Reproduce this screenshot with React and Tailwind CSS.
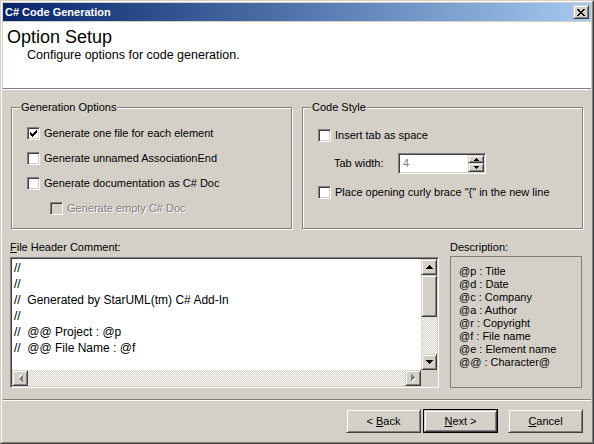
import React from 'react';

const HEADER_LINES = [
  '//',
  '//',
  '//  Generated by StarUML(tm) C# Add-In',
  '//',
  '//  @@ Project : @p',
  '//  @@ File Name : @f',
];

const DESCRIPTION = [
  '@p : Title',
  '@d : Date',
  '@c : Company',
  '@a : Author',
  '@r : Copyright',
  '@f : File name',
  '@e : Element name',
  '@@ : Character@',
];

const raised =
  'border border-t-[#d4d0c8] border-l-[#d4d0c8] border-r-[#404040] border-b-[#404040] shadow-[inset_1px_1px_0_#ffffff,inset_-1px_-1px_0_#808080] bg-[#d4d0c8]';
const sunken =
  'border border-t-[#808080] border-l-[#808080] border-r-white border-b-white shadow-[inset_1px_1px_0_#404040,inset_-1px_-1px_0_#d4d0c8]';
const dither =
  'bg-[repeating-conic-gradient(#d4d0c8_0_25%,#ffffff_0_50%)] bg-[length:2px_2px]';

const CheckMark = () => (
  <svg width="7" height="7" viewBox="0 0 7 7" shapeRendering="crispEdges" className="absolute left-[2px] top-[2px]">
    <path
      fill="#000"
      d="M0 2h1v3H0z M1 3h1v3H1z M2 4h1v3H2z M3 3h1v3H3z M4 2h1v3H4z M5 1h1v3H5z M6 0h1v3H6z"
    />
  </svg>
);

const Checkbox = ({ checked, disabled }) => (
  <span
    className={`relative block w-[13px] h-[13px] shrink-0 ${sunken} ${
      disabled ? 'bg-[#d4d0c8]' : 'bg-white'
    }`}
  >
    {checked && <CheckMark />}
  </span>
);

const CheckRow = ({ label, checked, disabled, className = '' }) => (
  <div className={`flex items-center gap-[4px] h-[13px] ${className}`}>
    <Checkbox checked={checked} disabled={disabled} />
    <span
      className={`whitespace-nowrap leading-[13px] ${
        disabled ? 'text-[#808080] [text-shadow:1px_1px_0_#ffffff]' : 'text-black'
      }`}
    >
      {label}
    </span>
  </div>
);

const GroupBox = ({ title, children, className = '' }) => (
  <div
    className={`relative h-[122px] flex-1 border border-[#808080] shadow-[inset_1px_1px_0_#ffffff,1px_1px_0_#ffffff] ${className}`}
  >
    <span className="absolute -top-[7px] left-[8px] px-px bg-[#d4d0c8] leading-[13px] whitespace-nowrap">
      {title}
    </span>
    {children}
  </div>
);

// small pixel arrows, drawn row by row
const ArrowUp = ({ w = 7, color = '#000' }) => {
  const rows = Math.ceil(w / 2);
  let d = '';
  for (let i = 0; i < rows; i++) d += `M${rows - 1 - i} ${i}h${i * 2 + 1}v1h-${i * 2 + 1}z `;
  return (
    <svg width={w} height={rows} viewBox={`0 0 ${w} ${rows}`} shapeRendering="crispEdges">
      <path fill={color} d={d} />
    </svg>
  );
};

const ArrowDown = ({ w = 7, color = '#000' }) => (
  <span className="block rotate-180 leading-none">
    <ArrowUp w={w} color={color} />
  </span>
);

const ArrowSide = ({ dir, color = '#808080' }) => (
  <svg
    width="5"
    height="8"
    viewBox="0 0 5 8"
    shapeRendering="crispEdges"
    className={dir === 'right' ? '' : 'rotate-180'}
  >
    <path fill="#ffffff" d="M1 1h1v7H1z M2 2h1v5H2z M3 3h1v3H3z M4 4h1v1H4z" />
    <path fill={color} d="M0 0h1v7H0z M1 1h1v5H1z M2 2h1v3H2z M3 3h1v1H3z" />
  </svg>
);

const PushButton = ({ children, isDefault }) => (
  <div className={`h-[24px] w-[75px] ${isDefault ? 'border border-black' : ''}`}>
    <div className={`h-full w-full flex items-center justify-center ${raised}`}>{children}</div>
  </div>
);

export default function App() {
  return (
    <div className="w-[594px] h-[444px] bg-[#d4d0c8] border border-t-[#d4d0c8] border-l-[#d4d0c8] border-r-[#404040] border-b-[#404040] font-['Liberation_Sans',Arial,sans-serif] text-[11px] text-black overflow-hidden">
      <div className="h-full flex flex-col border border-t-white border-l-white border-r-[#808080] border-b-[#808080] p-px">
        {/* title bar */}
        <div className="h-[18px] shrink-0 flex items-center justify-between pl-[2px] pr-[2px] bg-gradient-to-r from-[#0a246a] to-[#a6caf0]">
          <span className="text-white font-bold text-[11px] leading-[18px]">C# Code Generation</span>
          <div className={`w-[16px] h-[14px] flex items-center justify-center ${raised}`}>
            <svg width="8" height="7" viewBox="0 0 8 7" shapeRendering="crispEdges">
              <path
                fill="#000"
                d="M0 0h2v1H0z M6 0h2v1H6z M1 1h2v1H1z M5 1h2v1H5z M2 2h4v1H2z M3 3h2v1H3z M2 4h4v1H2z M1 5h2v1H1z M5 5h2v1H5z M0 6h2v1H0z M6 6h2v1H6z"
              />
            </svg>
          </div>
        </div>

        {/* header */}
        <div className="mt-px h-[66px] shrink-0 bg-white pl-[4px] pt-[5px]">
          <div className="text-[18px] leading-[20px]">Option Setup</div>
          <div className="mt-px ml-[20px] text-[12.5px] leading-[14px]">Configure options for code generation.</div>
        </div>
        <div className="h-px bg-[#808080]" />
        <div className="h-px bg-white" />

        {/* body */}
        <div className="flex-1 flex flex-col px-[8px] pt-[17px]">
          <div className="flex gap-[10px]">
            <GroupBox title="Generation Options">
              <div className="flex flex-col gap-[12px] pl-[15px] pt-[19px]">
                <CheckRow label="Generate one file for each element" checked />
                <CheckRow label="Generate unnamed AssociationEnd" />
                <CheckRow label="Generate documentation as C# Doc" />
                <CheckRow label="Generate empty C# Doc" disabled className="ml-[23px]" />
              </div>
            </GroupBox>
            <GroupBox title="Code Style">
              <div className="flex flex-col pl-[15px] pt-[21px]">
                <CheckRow label="Insert tab as space" />
                <div className="flex items-center ml-[16px] mt-[11px]">
                  <span className="w-[64px] leading-[13px]">Tab width:</span>
                  <div className={`w-[88px] h-[21px] flex bg-white ${sunken} p-px`}>
                    <span className="flex-1 pl-[3px] text-[#808080] leading-[17px]">4</span>
                    <div className="w-[16px] flex flex-col">
                      <div className={`h-[8px] flex items-center justify-center ${raised}`}>
                        <ArrowUp w={5} />
                      </div>
                      <div className={`h-[9px] flex items-center justify-center ${raised}`}>
                        <ArrowDown w={5} />
                      </div>
                    </div>
                  </div>
                </div>
                <CheckRow label={'Place opening curly brace "{" in the new line'} className="mt-[12px]" />
              </div>
            </GroupBox>
          </div>

          <div className="flex gap-[11px] -ml-px mt-[12px]">
            <div className="w-[429px] flex flex-col">
              <span className="leading-[13px]">
                <span className="underline">F</span>ile Header Comment:
              </span>
              <div className={`mt-[3px] h-[131px] flex flex-col bg-white ${sunken} p-px`}>
                <div className="flex-1 flex min-h-0">
                  <div className="flex-1 overflow-hidden pl-[2px] pt-px text-[12px] leading-[16px]">
                    {HEADER_LINES.map((line, i) => (
                      <div key={i} className="whitespace-pre">
                        {line}
                      </div>
                    ))}
                  </div>
                  <div className="w-[16px] flex flex-col">
                    <div className={`h-[16px] flex items-center justify-center ${raised}`}>
                      <ArrowUp />
                    </div>
                    <div className={`h-[42px] ${raised}`} />
                    <div className={`flex-1 ${dither}`} />
                    <div className={`h-[16px] flex items-center justify-center ${raised}`}>
                      <ArrowDown />
                    </div>
                  </div>
                </div>
                <div className="h-[16px] flex">
                  <div className={`w-[16px] flex items-center justify-center ${raised}`}>
                    <ArrowSide dir="left" />
                  </div>
                  <div className={`flex-1 ${dither}`} />
                  <div className={`w-[16px] flex items-center justify-center ${raised}`}>
                    <ArrowSide dir="right" />
                  </div>
                  <div className="w-[16px] bg-[#d4d0c8]" />
                </div>
              </div>
            </div>

            <div className="w-[132px] flex flex-col">
              <span className="leading-[13px]">Description:</span>
              <div className="mt-[2px] h-[132px] border border-[#808080] pl-[8px] pt-[8px]">
                {DESCRIPTION.map((line) => (
                  <div key={line} className="leading-[13px] whitespace-nowrap">
                    {line}
                  </div>
                ))}
              </div>
            </div>
          </div>

          <div className="-mx-[8px] mt-[11px] h-px bg-[#808080]" />
          <div className="-mx-[8px] h-px bg-white" />

          <div className="mt-[8px] flex justify-end">
            <PushButton>
              &lt; <span className="underline ml-[3px]">B</span>ack
            </PushButton>
            <div className="ml-[2px]">
              <PushButton isDefault>
                <span className="underline">N</span>ext &gt;
              </PushButton>
            </div>
            <div className="ml-[10px]">
              <PushButton>
                <span className="underline">C</span>ancel
              </PushButton>
            </div>
          </div>
        </div>
      </div>
    </div>
  );
}
